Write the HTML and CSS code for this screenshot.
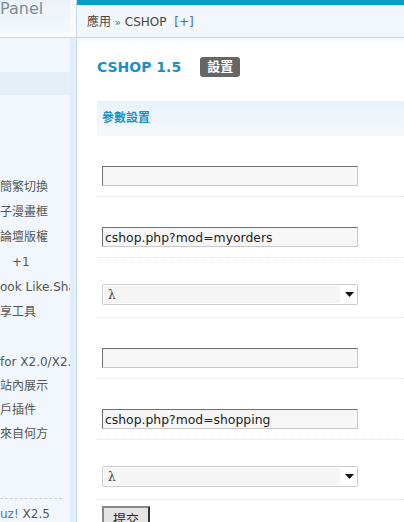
FILE: index.html
```html
<!DOCTYPE html>
<html lang="zh-Hant">
  <head>
    <meta charset="UTF-8" />
    <meta name="viewport" content="width=device-width, initial-scale=1.0" />
    <title>CSHOP 設置</title>
    <link rel="stylesheet" href="styles.css">
  </head>
  <body>
    <div class="page">
      <aside class="side">
        <div class="side-head">Panel</div>
        <div class="side-body">
          <div class="side-top"></div>
          <div class="side-band"></div>
          <ul class="side-menu">
            <li>簡繁切換</li>
            <li>子漫畫框</li>
            <li>論壇版權</li>
            <li class="indent">+1</li>
            <li>ook Like.Share</li>
            <li>享工具</li>
          </ul>
          <ul class="side-menu second">
            <li>for X2.0/X2.5</li>
            <li>站內展示</li>
            <li>戶插件</li>
            <li>來自何方</li>
          </ul>
          <div class="side-foot"><span class="brand">uz!</span> X2.5</div>
        </div>
      </aside>

      <main class="main">
        <div class="crumb">應用 <span class="raquo">»</span> CSHOP <a class="plus" href="#">[+]</a></div>

        <div class="content">
          <h1 class="title">CSHOP 1.5 <span class="badge">設置</span></h1>

          <form class="settings">
            <h2 class="section">參數設置</h2>

            <div class="row"><input type="text" class="txt" value="" /></div>
            <div class="row"><input type="text" class="txt" value="cshop.php?mod=myorders" /></div>
            <div class="row">
              <div class="select">
                <select><option>λ</option></select>
                <svg class="arrow" width="9" height="5" viewBox="0 0 9 5"><path d="M0 0h9L4.5 5z" fill="#111"/></svg>
              </div>
            </div>
            <div class="row"><input type="text" class="txt" value="" /></div>
            <div class="row"><input type="text" class="txt" value="cshop.php?mod=shopping" /></div>
            <div class="row">
              <div class="select">
                <select><option>λ</option></select>
                <svg class="arrow" width="9" height="5" viewBox="0 0 9 5"><path d="M0 0h9L4.5 5z" fill="#111"/></svg>
              </div>
            </div>

            <button type="submit" class="submit">提交</button>
          </form>
        </div>
      </main>
    </div>
  </body>
</html>
```

FILE: styles.css
```css
body {
  margin: 0;
  height: 522px;
  overflow: hidden;
  font-family: "DejaVu Sans", "Noto Sans CJK TC", sans-serif;
  font-size: 12px;
  color: #444;
  background: #fff;
}
.page {
  display: flex;
  height: 522px;
}

/* sidebar */
.side {
  width: 76px;
  flex-shrink: 0;
  display: flex;
  flex-direction: column;
}
.side-head {
  height: 33px;
  font-size: 16px;
  line-height: 18px;
  color: #7d8c99;
  background: linear-gradient(#eaf2f9, #f3f8fc);
  border-bottom: 4px solid #fff;
  box-shadow: inset -6px 0 0 #f7fafd;
}
.side-body {
  flex: 1;
  border-top: 1px solid #c4d7e6;
  border-right: 6px solid #e2edf7;
  background: #f1f7fc;
  overflow: hidden;
  white-space: nowrap;
}
.side-top {
  height: 34px;
}
.side-band {
  height: 23px;
  background: #e4eff8;
}
.side-menu {
  list-style: none;
  margin: 80px 0 0;
  padding: 0;
  color: #555;
}
.side-menu li {
  height: 25px;
  line-height: 25px;
  overflow: hidden;
}
.side-menu .indent {
  padding-left: 12px;
}
.side-menu.second {
  margin-top: 25px;
}
.side-menu.second li {
  height: 24px;
  line-height: 24px;
}
.side-foot {
  margin-top: 52px;
  padding-top: 8px;
  border-top: 1px dashed #cdd5dc;
  width: 62px;
  color: #555;
}
.side-foot .brand {
  color: #3f7fbf;
}

/* main panel */
.main {
  flex: 1;
  border-left: 1px solid #c8dbe8;
  min-width: 0;
}
.crumb {
  height: 29px;
  line-height: 29px;
  padding: 3px 0 0 10px;
  border-top: 5px solid #0a9dc9;
  border-bottom: 1px solid #c4d7e6;
  background: #f1f7fb;
  color: #444;
  white-space: nowrap;
}
.crumb .raquo {
  font-size: 10px;
  color: #666;
}
.crumb .plus {
  margin-left: 4px;
  color: #3e6fa3;
  text-decoration: none;
}
.content {
  padding: 17px 0 0 20px;
  background: linear-gradient(#f4f8fb, #fff 8px);
}
.title {
  margin: 0;
  height: 24px;
  display: flex;
  align-items: center;
  font-size: 14px;
  font-weight: bold;
  color: #1b8fc1;
}
.badge {
  margin-left: 19px;
  padding: 0 7px;
  height: 20px;
  line-height: 20px;
  border-radius: 3px;
  background: #666;
  color: #fff;
  font-size: 13px;
}
.settings {
  margin-top: 22px;
}
.section {
  margin: 0;
  height: 35px;
  line-height: 34px;
  padding-left: 5px;
  font-size: 12px;
  font-weight: bold;
  color: #1b8fc1;
  background: linear-gradient(#eaf3fa, #f4f8fb);
}
.row {
  padding: 30px 0 10px 5px;
  border-bottom: 1px dotted #d6dde3;
}
.txt {
  display: block;
  box-sizing: border-box;
  width: 256px;
  height: 20px;
  margin: 0;
  padding: 0 2px;
  border: 1px solid;
  border-color: #707070 #c8c8c8 #c8c8c8 #707070;
  background: #f6f6f6;
  font-family: "DejaVu Sans", sans-serif;
  font-size: 12.4px;
  color: #222;
}
.select {
  box-sizing: border-box;
  width: 256px;
  height: 21px;
  margin: -4px 0 2px;
  display: flex;
  align-items: center;
  border: 1px solid #ccc;
  border-radius: 2px;
  background: #fff;
}
.select select {
  appearance: none;
  -webkit-appearance: none;
  width: 236px;
  height: 17px;
  margin-left: 1px;
  padding: 0 4px;
  border: none;
  background: #f5f5f5;
  font-family: "DejaVu Serif", serif;
  font-size: 12px;
  color: #444;
}
.select .arrow {
  margin-left: 5px;
}
.submit {
  margin: 6px 0 0 5px;
  width: 48px;
  height: 24px;
  padding: 0;
  border: 2px solid;
  border-color: #888 #333 #333 #888;
  background: #e4e4e4;
  font-family: "Noto Sans CJK TC", sans-serif;
  font-size: 13px;
  color: #222;
}
```
